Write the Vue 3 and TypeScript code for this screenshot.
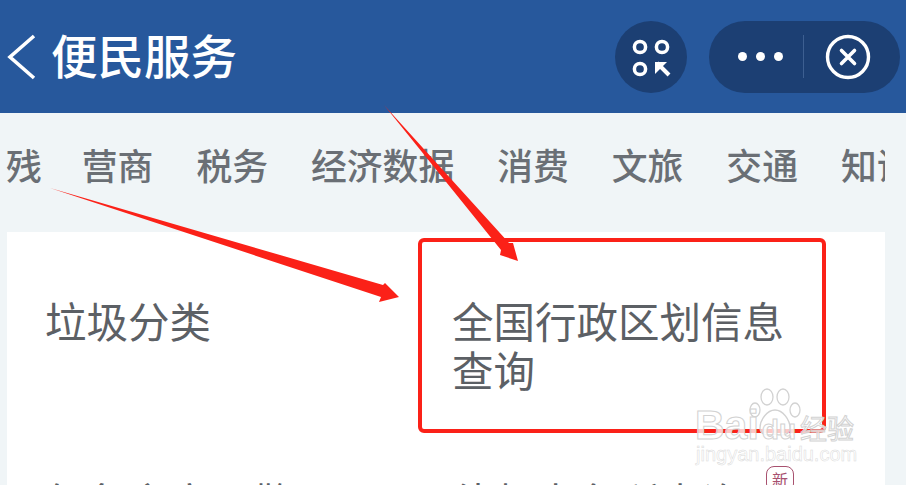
<script setup lang="ts">
const tabs = ['残', '营商', '税务', '经济数据', '消费', '文旅', '交通', '知识']

interface Service {
  name: string
  isNew?: boolean
}

const services: Service[] = [
  { name: '垃圾分类' },
  { name: '全国行政区划信息查询' },
  { name: '气象灾害预警' },
  { name: '律师事务所查询', isNew: true },
]
</script>

<template>
  <div class="page">
    <header class="topbar">
      <svg class="back" width="30" height="46" viewBox="0 0 30 46">
        <path d="M27 2 L3 23 L27 44" fill="none" stroke="#fff" stroke-width="3.6" />
      </svg>
      <h1>便民服务</h1>
      <div class="actions">
        <button class="scan">
          <svg width="44" height="44" viewBox="0 0 44 44">
            <g fill="none" stroke="#fff" stroke-width="3.5">
              <circle cx="11" cy="12" r="5.6" />
              <circle cx="33" cy="12" r="5.6" />
              <circle cx="11" cy="34" r="5.6" />
              <path d="M40 40 L28 28" stroke-width="4" />
            </g>
            <path d="M26 27 H38 L26 39 Z" fill="#fff" />
          </svg>
        </button>
        <div class="capsule">
          <div class="dots"><i></i><i></i><i></i></div>
          <span class="divider"></span>
          <svg width="48" height="48" viewBox="0 0 48 48">
            <circle cx="24" cy="24" r="20.5" fill="none" stroke="#fff" stroke-width="3.4" />
            <path d="M17.5 17.5 L30.5 30.5 M30.5 17.5 L17.5 30.5" stroke="#fff" stroke-width="3.6" stroke-linecap="round" />
          </svg>
        </div>
      </div>
    </header>

    <nav class="tabs">
      <span v-for="tab in tabs" :key="tab">{{ tab }}</span>
    </nav>

    <main class="card">
      <div v-for="item in services" :key="item.name" class="service">
        {{ item.name }}
        <span v-if="item.isNew" class="new-badge">新</span>
      </div>
    </main>

    <!-- annotations drawn on top of the screenshot -->
    <div class="red-box"></div>
    <svg class="arrows" width="906" height="485" viewBox="0 0 906 485">
      <polygon points="384,105 509,243 513,243 518,261 500,255 501,250" fill="#fb2118" />
      <polygon points="50,188 383,285 385,283 399,297 379,302 381,297" fill="#fb2118" />
    </svg>

    <div class="watermark">
      <svg class="paw" width="54" height="50" viewBox="0 0 54 50">
        <g fill="#fff" fill-opacity="0.75" stroke="#d2d2d2" stroke-width="1.3">
          <ellipse cx="7" cy="22" rx="5" ry="7" />
          <ellipse cx="19" cy="9" rx="6" ry="8" />
          <ellipse cx="35" cy="9" rx="6" ry="8" />
          <ellipse cx="47" cy="22" rx="5" ry="7" />
          <path d="M27 22 C19 22 12 32 12 40 C12 47 20 48 27 46 C34 48 42 47 42 40 C42 32 35 22 27 22 Z" />
        </g>
      </svg>
      <div class="mark-top">
        <span class="bai">Bai</span><span class="du">du</span><span class="jy">经验</span>
      </div>
      <div class="mark-url">jingyan.baidu.com</div>
    </div>
  </div>
</template>

<style scoped>
.page {
  position: relative;
  width: 906px;
  height: 485px;
  overflow: hidden;
  background: #f0f5f7;
  font-family: "Noto Sans CJK SC", "Liberation Sans", sans-serif;
}

.topbar {
  display: flex;
  align-items: center;
  height: 113px;
  padding: 0 6px 0 7px;
  box-sizing: border-box;
  background: #27589c;
  color: #fff;
}
.topbar h1 {
  margin: 0 0 4px 14px;
  font-size: 46.5px;
  font-weight: 500;
  line-height: 1;
}
.back { flex: none; }
.actions {
  display: flex;
  align-items: center;
  gap: 22px;
  margin-left: auto;
}
.scan {
  display: flex;
  align-items: center;
  justify-content: center;
  width: 72px;
  height: 72px;
  padding: 0;
  border: 0;
  border-radius: 50%;
  background: #1c3f73;
}
.capsule {
  display: flex;
  align-items: center;
  width: 191px;
  height: 72px;
  box-sizing: border-box;
  padding: 0 27px 0 29px;
  border-radius: 36px;
  background: #1c3f73;
}
.dots { display: flex; gap: 9px; }
.dots i {
  width: 9px;
  height: 9px;
  border-radius: 50%;
  background: #fff;
}
.divider {
  width: 1px;
  height: 43px;
  margin: 0 20px 0 20px;
  background: #3d5f91;
}

.tabs {
  display: flex;
  gap: 43px;
  width: 885px;
  height: 119px;
  box-sizing: border-box;
  padding: 33px 0 0 6px;
  overflow: hidden;
  font-size: 35.8px;
  font-weight: 500;
  line-height: 36px;
  color: #6a6f75;
  white-space: nowrap;
}
.tabs span { flex: none; }
.tabs span:first-child { margin-right: -3px; }

.card {
  display: grid;
  grid-template-columns: 360px 360px;
  column-gap: 47px;
  row-gap: 77px;
  align-items: start;
  margin: 0 21px 0 7px;
  padding: 64px 38px 0;
  height: 300px;
  box-sizing: border-box;
  background: #fff;
  font-size: 41.5px;
  line-height: 49px;
  color: #5c6065;
}
.service { position: relative; }
.new-badge {
  position: absolute;
  left: 314px;
  top: -11px;
  width: 26px;
  height: 24px;
  border: 1.5px solid #a8516f;
  border-radius: 8px;
  background: #fff;
  font-size: 16px;
  line-height: 24px;
  text-align: center;
  color: #a8516f;
}

.red-box {
  position: absolute;
  left: 418px;
  top: 238px;
  width: 408px;
  height: 195px;
  box-sizing: border-box;
  border: 4px solid #fb2118;
  border-radius: 6px;
}
.arrows {
  position: absolute;
  left: 0;
  top: 0;
}

.watermark {
  position: absolute;
  left: 695px;
  top: 388px;
  width: 170px;
  height: 80px;
  font-family: "Liberation Sans", sans-serif;
  color: rgba(255, 255, 255, 0.75);
  -webkit-text-stroke: 1px #d2d2d2;
}
.paw {
  position: absolute;
  left: 53px;
  top: 0;
}
.mark-top {
  position: absolute;
  left: 0;
  top: 18px;
  display: flex;
  align-items: baseline;
  white-space: nowrap;
}
.bai { font-size: 41px; font-weight: 700; line-height: 38px; }
.du { margin-left: 3px; font-size: 28px; font-weight: 700; line-height: 38px; color: rgba(255, 255, 255, 0.85); }
.jy {
  margin-left: 4px;
  font-family: "Noto Sans CJK SC", sans-serif;
  font-size: 27px;
  line-height: 38px;
}
.mark-url {
  position: absolute;
  left: 1px;
  top: 55px;
  font-size: 20px;
  line-height: 22px;
  white-space: nowrap;
  -webkit-text-stroke: 0.5px #dadada;
  color: rgba(255, 255, 255, 0.6);
}
</style>
